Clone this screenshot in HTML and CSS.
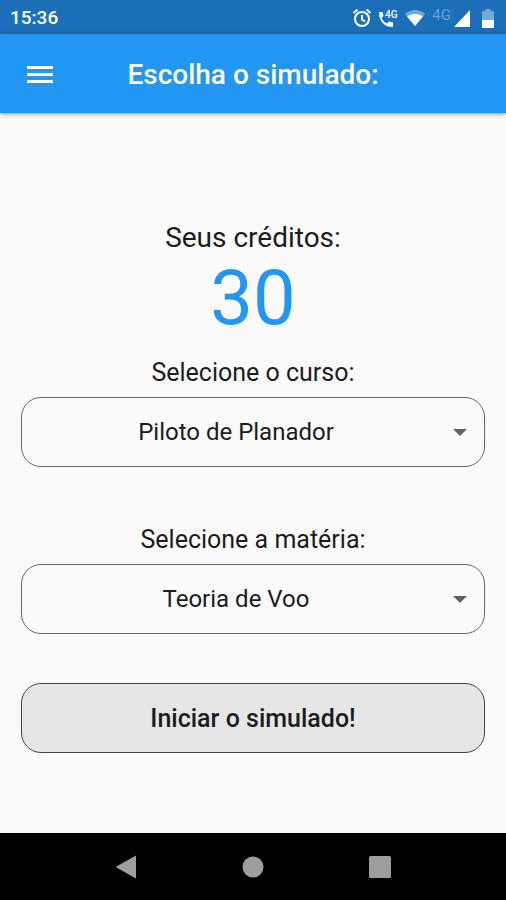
FILE: index.html
```html
<!DOCTYPE html>
<html lang="pt-BR">
<head>
<meta charset="utf-8">
<meta name="viewport" content="width=device-width, initial-scale=1">
<title>Escolha o simulado</title>
<link rel="stylesheet" href="styles.css">
</head>
<body>
<div class="status">
  <span class="clock">15:36</span>
  <div class="status-icons">
    <svg width="20" height="20" viewBox="0 0 20 20" fill="none" stroke="#fff" stroke-width="2" aria-hidden="true">
      <circle cx="10" cy="11" r="7"/><path d="M10 7v4.500l3 2M1.500 5l4-3.500M18.500 5l-4-3.500"/>
    </svg>
    <svg class="call" width="20" height="20" viewBox="0 0 20 20" fill="#fff" aria-hidden="true">
      <path d="M1 4h3.500l1 4-2 2c1.300 2.600 3 4.300 5.500 5.600l2-2 4 1v3.600c0 .6-.4.800-1 .8C7 19 1 13 1 5z"/>
      <text x="7" y="10" class="call-net">4G</text>
    </svg>
    <svg class="wifi" width="22" height="18" viewBox="0 0 22 18" aria-hidden="true">
      <path d="M1 5C7-.5 15-.5 21 5L11 17z" fill="#76a9d4"/><path d="M3 7.500c4-3.500 12-3.500 16 0L11 17z" fill="#fff"/>
    </svg>
    <span class="net">4G</span>
    <svg class="signal" width="16" height="17" viewBox="0 0 17 18" fill="#fff" aria-hidden="true"><path d="M17 0v18H0z"/></svg>
    <svg width="12" height="19" viewBox="0 0 12 19" aria-hidden="true">
      <path d="M3.500 0h5v2H11q1 0 1 1v8H0V3q0-1 1-1h2.500z" fill="#76a9d4"/><path d="M0 11h12v7q0 1-1 1H1q-1 0-1-1z" fill="#fff"/>
    </svg>
  </div>
</div>
<header class="appbar">
  <button class="menu" type="button" aria-label="Menu">
    <svg width="26" height="18" viewBox="0 0 26 18" fill="#fff" aria-hidden="true"><path d="M0 0h26v3H0zM0 7h26v3H0zM0 14h26v3H0z"/></svg>
  </button>
  <h1 class="title">Escolha o simulado:</h1>
</header>
<main class="content">
  <p class="credits-label">Seus créditos:</p>
  <p class="credits">30</p>
  <div class="field">
    <label for="curso">Selecione o curso:</label>
    <div class="select-box">
      <select id="curso"><option>Piloto de Planador</option></select>
      <svg class="arrow" width="14" height="7" viewBox="0 0 14 7" fill="#616161" aria-hidden="true"><path d="M0 0h14L7 7z"/></svg>
    </div>
  </div>
  <div class="field">
    <label for="materia">Selecione a matéria:</label>
    <div class="select-box">
      <select id="materia"><option>Teoria de Voo</option></select>
      <svg class="arrow" width="14" height="7" viewBox="0 0 14 7" fill="#616161" aria-hidden="true"><path d="M0 0h14L7 7z"/></svg>
    </div>
  </div>
  <button class="start" type="button">Iniciar o simulado!</button>
</main>
<nav class="navbar">
  <button type="button" aria-label="Voltar"><svg width="22" height="24" viewBox="0 0 22 24" fill="#9e9e9e"><path d="M21 1v22q0 .6-.6.300L1.500 12.500q-.6-.5 0-1L20.400.700q.6-.3.600.300z"/></svg></button>
  <button type="button" aria-label="Início"><svg width="22" height="22" viewBox="0 0 22 22" fill="#9e9e9e"><circle cx="11" cy="11" r="10.500"/></svg></button>
  <button type="button" aria-label="Recentes"><svg width="22" height="22" viewBox="0 0 22 22" fill="#9e9e9e"><rect width="22" height="22" rx="1.500"/></svg></button>
</nav>
</body>
</html>
```

FILE: styles.css
```css
* {
  box-sizing: border-box;
}

body {
  margin: 0;
  min-height: 100vh;
  display: flex;
  flex-direction: column;
  background: #fafafa;
  color: #1c1c1c;
  font-family: Roboto, sans-serif;
}

button {
  font: inherit;
  color: inherit;
  border: 0;
  padding: 0;
  background: none;
}

svg {
  display: block;
  flex: none;
}

.status {
  display: flex;
  align-items: center;
  justify-content: space-between;
  height: 34px;
  padding: 2px 12px 0 10px;
  background: #1a6fb8;
  color: #fff;
}

.clock {
  font-size: 19px;
  font-weight: 500;
  line-height: 24px;
}

.status-icons {
  display: flex;
  align-items: center;
}

.call {
  margin-left: 6px;
  overflow: visible;
}

.call-net {
  font-size: 10px;
  font-weight: 500;
}

.wifi {
  margin-left: 6px;
}

.net {
  margin: 0 3px 6px 6px;
  font-size: 15px;
  line-height: 16px;
  color: #69a0d0;
}

.signal {
  margin-right: 12px;
}

.appbar {
  display: flex;
  align-items: center;
  height: 79px;
  padding: 2px 21px 0;
  background: #2196f3;
  color: #fff;
  box-shadow: 0 1px 4px rgba(0, 0, 0, 0.4);
}

.menu {
  padding: 6px;
}

.title {
  flex: 1;
  margin: 0 38px 0 0;
  text-align: center;
  font-size: 28px;
  font-weight: 500;
  line-height: 32px;
}

.content {
  flex: 1;
  display: flex;
  flex-direction: column;
  justify-content: flex-end;
  padding: 24px 21px 80px;
  text-align: center;
}

.credits-label,
.credits {
  margin: 0;
}

.credits-label {
  font-size: 28px;
  line-height: 32px;
}

.credits {
  font-size: 76px;
  line-height: 88px;
  color: #2196f3;
}

.field {
  display: flex;
  flex-direction: column;
  margin-top: 15px;
}

.field + .field {
  margin-top: 57px;
}

.field label {
  font-size: 25px;
  line-height: 32px;
  margin-bottom: 8px;
}

.select-box {
  display: grid;
  align-items: center;
}

.select-box select {
  grid-area: 1 / 1;
  appearance: none;
  width: 100%;
  height: 70px;
  padding: 0 34px 0 0;
  border: 1px solid #666;
  border-radius: 20px;
  background: transparent;
  color: inherit;
  font: 24px Roboto, sans-serif;
  text-align: center;
  text-align-last: center;
}

.arrow {
  grid-area: 1 / 1;
  justify-self: end;
  margin-right: 18px;
  pointer-events: none;
}

.start {
  height: 70px;
  margin-top: 49px;
  border: 1px solid #444;
  border-radius: 20px;
  background: #e6e6e6;
  font-size: 25px;
  font-weight: 500;
}

.navbar {
  display: flex;
  align-items: center;
  justify-content: center;
  gap: 105px;
  height: 67px;
  background: #000;
}
```
